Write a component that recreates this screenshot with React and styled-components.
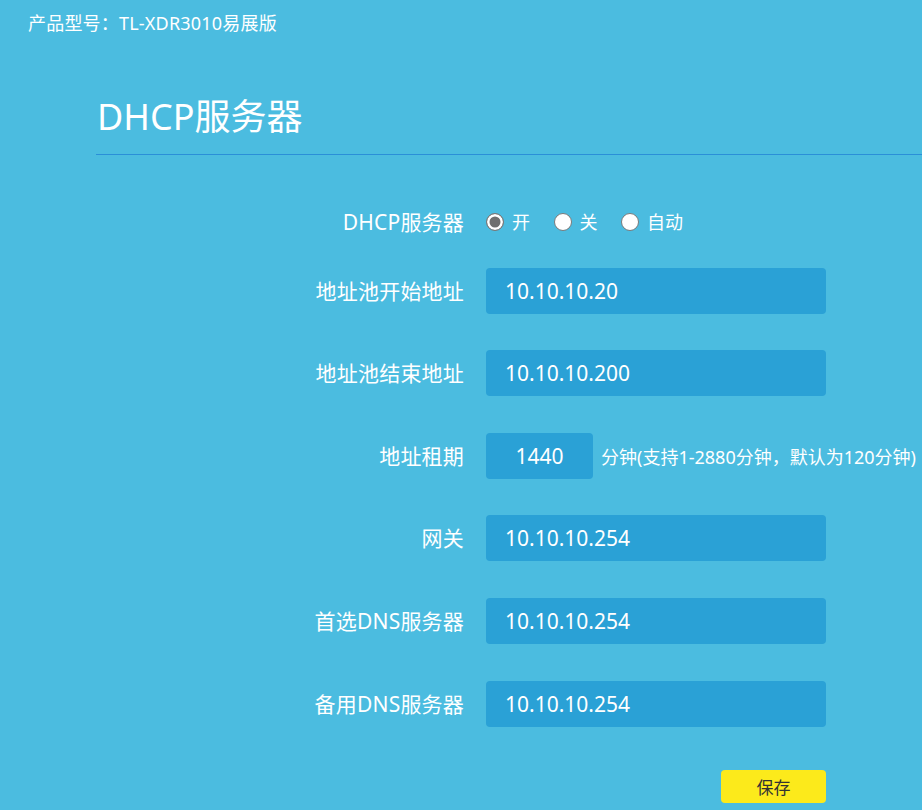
import React from "react";
import styled, { createGlobalStyle } from "styled-components";

const GlobalStyle = createGlobalStyle`
  html, body {
    margin: 0;
    padding: 0;
    background: #4bbce0;
  }
  body {
    font-family: "Noto Sans", "Noto Sans CJK SC", sans-serif;
    color: #ffffff;
  }
  * { box-sizing: border-box; }
`;

const Page = styled.div`
  min-height: 810px;
`;

const TopBar = styled.div`
  padding: 11px 0 0 28px;
  height: 40px;
  font-size: 18px;
  line-height: 24px;
  letter-spacing: 0.2px;
  white-space: nowrap;
`;

const Main = styled.main`
  margin-left: 96px;
`;

const Title = styled.h1`
  margin: 0;
  padding: 55px 0 15px 1px;
  font-size: 36px;
  font-weight: 400;
  line-height: 44px;
  border-bottom: 1px solid #2a8fd8;
`;

const Form = styled.form`
  display: flex;
  flex-direction: column;
  gap: 36.6px;
  padding-top: 53px;
`;

const Row = styled.div`
  display: grid;
  grid-template-columns: 368px auto;
  column-gap: 22px;
  align-items: center;
  height: ${(p) => (p.$compact ? "18px" : "46px")};
  margin-bottom: ${(p) => (p.$compact ? "5px" : "0")};
`;

const Label = styled.label`
  text-align: right;
  font-size: 21px;
  line-height: 28px;
  letter-spacing: 0.2px;
  white-space: nowrap;
`;

const Field = styled.div`
  display: flex;
  align-items: center;
`;

const TextInput = styled.input`
  width: ${(p) => (p.$short ? "107px" : "340px")};
  height: 46px;
  padding: 0 ${(p) => (p.$short ? "0" : "19px")};
  border: none;
  border-radius: 4px;
  background: #2aa1d6;
  color: #ffffff;
  font-family: inherit;
  font-size: 21px;
  text-align: ${(p) => (p.$short ? "center" : "left")};
  outline: none;
`;

const Hint = styled.span`
  margin-left: 8px;
  font-size: 18px;
  white-space: nowrap;
`;

const RadioGroup = styled.div`
  display: flex;
  align-items: center;
`;

const RadioOption = styled.label`
  display: flex;
  align-items: center;
  gap: 8px;
  margin-right: 23.5px;
  font-size: 18px;
  line-height: 18px;
  cursor: pointer;
`;

const Radio = styled.input.attrs({ type: "radio" })`
  appearance: none;
  -webkit-appearance: none;
  margin: 0;
  width: 18px;
  height: 18px;
  border-radius: 50%;
  border: 1.5px solid #7a7a7a;
  background: #ffffff;
  &:checked {
    background: #6f6f6f;
    box-shadow: inset 0 0 0 2.5px #ffffff;
  }
`;

const ButtonRow = styled.div`
  display: grid;
  grid-template-columns: 368px 340px;
  column-gap: 22px;
  margin-top: 7px;
`;

const SaveButton = styled.button`
  grid-column: 2;
  justify-self: end;
  width: 105px;
  height: 33px;
  border: none;
  border-radius: 4px;
  background: #fcea1b;
  color: #333333;
  font-family: inherit;
  font-size: 17px;
  cursor: pointer;
`;

const fields = [
  { label: "地址池开始地址", value: "10.10.10.20" },
  { label: "地址池结束地址", value: "10.10.10.200" },
  { label: "地址租期", value: "1440", short: true, hint: "分钟(支持1-2880分钟，默认为120分钟)" },
  { label: "网关", value: "10.10.10.254" },
  { label: "首选DNS服务器", value: "10.10.10.254" },
  { label: "备用DNS服务器", value: "10.10.10.254" },
];

export default function App() {
  return (
    <Page>
      <GlobalStyle />
      <TopBar>产品型号：TL-XDR3010易展版</TopBar>
      <Main>
        <Title>DHCP服务器</Title>
        <Form onSubmit={(e) => e.preventDefault()}>
          <Row $compact>
            <Label>DHCP服务器</Label>
            <RadioGroup>
              <RadioOption>
                <Radio name="dhcp" defaultChecked />开
              </RadioOption>
              <RadioOption>
                <Radio name="dhcp" />关
              </RadioOption>
              <RadioOption>
                <Radio name="dhcp" />自动
              </RadioOption>
            </RadioGroup>
          </Row>
          {fields.map((f) => (
            <Row key={f.label}>
              <Label>{f.label}</Label>
              <Field>
                <TextInput $short={f.short} defaultValue={f.value} />
                {f.hint && <Hint>{f.hint}</Hint>}
              </Field>
            </Row>
          ))}
          <ButtonRow>
            <SaveButton type="submit">保存</SaveButton>
          </ButtonRow>
        </Form>
      </Main>
    </Page>
  );
}
